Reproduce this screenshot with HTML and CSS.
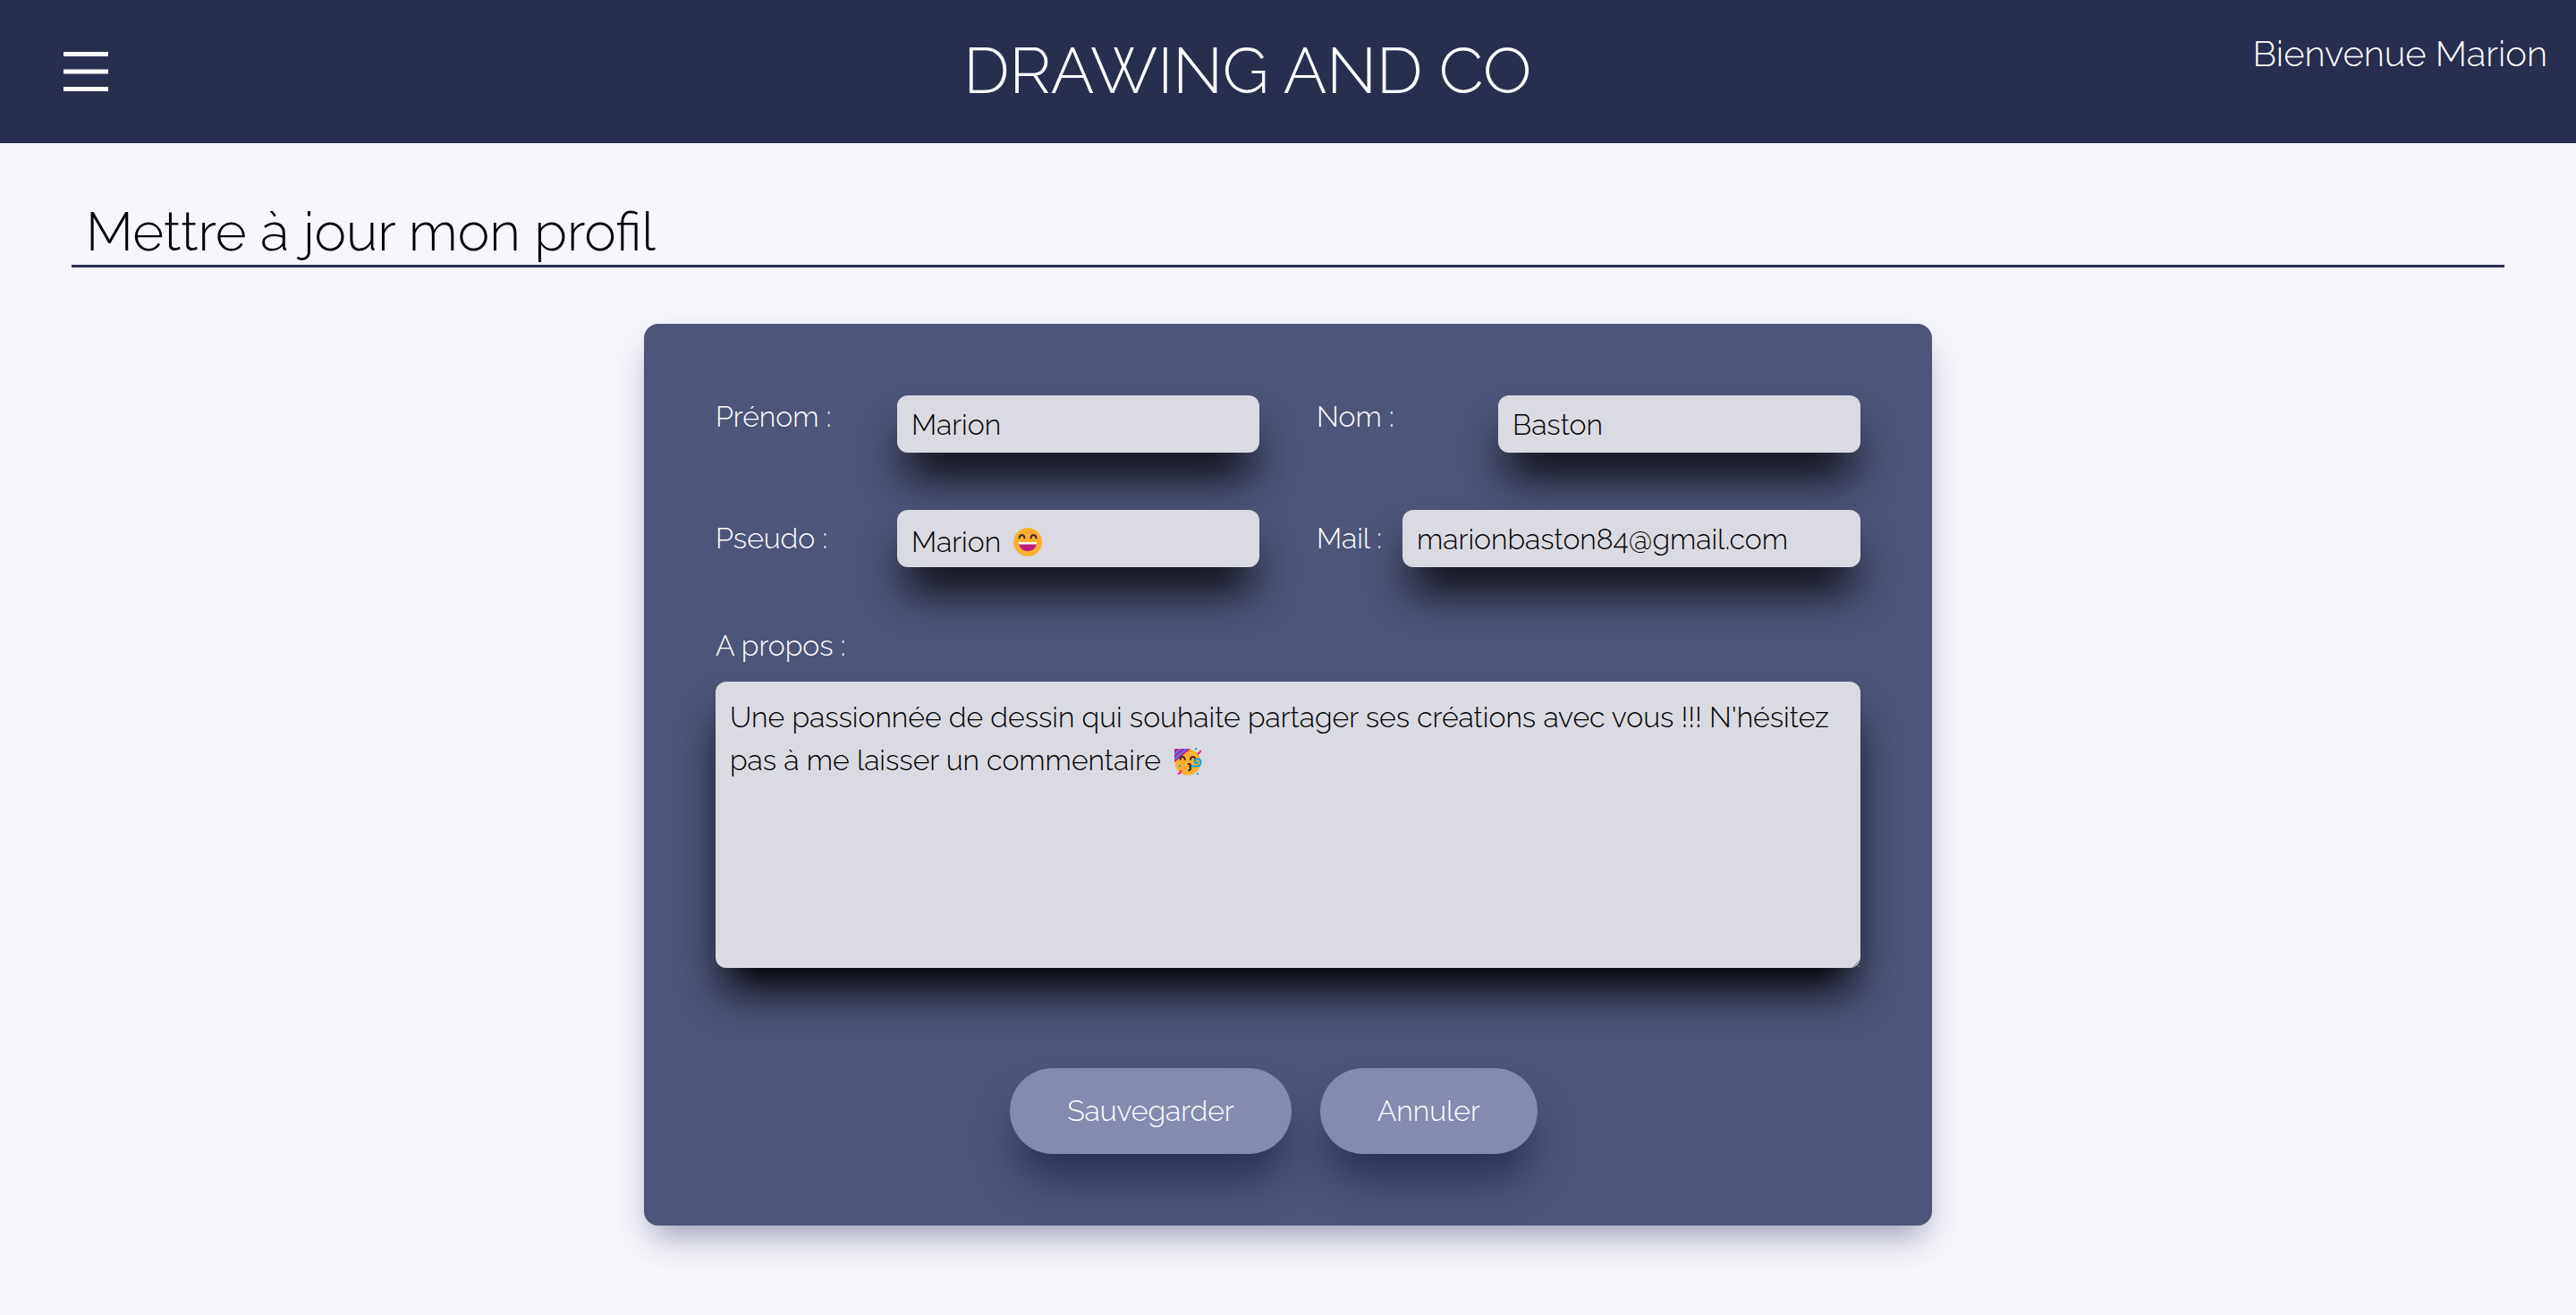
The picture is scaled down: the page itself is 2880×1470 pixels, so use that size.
FILE: index.html
```html
<!DOCTYPE html>
<html lang="fr">
<head>
  <meta charset="utf-8">
  <meta name="viewport" content="width=device-width, initial-scale=1">
  <title>Drawing and Co</title>
  <link rel="stylesheet" href="styles.css">
</head>
<body>
  <header class="header">
    <nav class="header-nav">
      <button class="burger" type="button" aria-label="Menu">
        <svg class="burger-icon" viewBox="0 0 50 44" aria-hidden="true">
          <path d="M0 0h50v5H0zM0 19.5h50v5H0zM0 39h50v5H0z" fill="currentColor"/>
        </svg>
      </button>
    </nav>
    <h1 class="brand">DRAWING AND CO</h1>
    <p class="welcome">Bienvenue Marion</p>
  </header>

  <main class="main">
    <h2 class="page-title">Mettre à jour mon profil</h2>

    <form class="card">
      <div class="fields">
        <div class="field field-top">
          <label for="firstname">Prénom :</label>
          <input class="input" id="firstname" type="text" value="Marion">
        </div>
        <div class="field field-top">
          <label for="lastname">Nom :</label>
          <input class="input" id="lastname" type="text" value="Baston">
        </div>
        <div class="field">
          <label for="pseudo">Pseudo :</label>
          <div class="emoji-field">
            <input class="input input-emoji" id="pseudo" type="text" value="Marion 😄">
            <svg class="emoji emoji-pseudo" viewBox="0 0 44 44" aria-hidden="true">
              <rect width="44" height="44" fill="#dadae2"/>
              <circle cx="22" cy="22" r="16" fill="#ffb02e"/>
              <path d="M12.5 17.5c.3-2.200 1.500-3.500 3-3.500s2.700 1.300 3 3.500M25.500 17.500c.3-2.200 1.500-3.500 3-3.500s2.700 1.300 3 3.500" fill="none" stroke="#402a32" stroke-width="2" stroke-linecap="round"/>
              <path d="M12 22h20c0 6-4 10-10 10s-10-4-10-10z" fill="#bb1d80"/>
              <path d="M12 22h20v1.500a1 1 0 0 1-1 1H13a1 1 0 0 1-1-1z" fill="#fff"/>
            </svg>
          </div>
        </div>
        <div class="field">
          <label for="mail">Mail :</label>
          <input class="input input-wide" id="mail" type="email" value="marionbaston84@gmail.com">
        </div>
      </div>
      <label class="about-label" for="about">A propos :</label>
      <div class="emoji-field">
        <textarea class="input about" id="about">Une passionnée de dessin qui souhaite partager ses créations avec vous !!! N'hésitez pas à me laisser un commentaire 🥳</textarea>
        <svg class="emoji emoji-about" viewBox="0 0 44 44" aria-hidden="true">
          <rect width="44" height="44" fill="#dadae2"/>
          <circle cx="22" cy="22" r="14.500" fill="#ffb02e"/>
          <path d="M7 7h18L7 22z" fill="#bb1d80"/>
          <path d="M12 7h3L7 15v-3zM19 7h3L7 20v-3z" fill="#5b7cf7"/>
          <path d="M13.500 19c.2-2 1.200-3 2.500-3s2.500 1 2.800 3M25 19c.2-2 1.200-3 2.500-3s2.300.8 2.800 2.500M22.500 24h1.500c1.500 0 1.500 3 0 3 1.800.2 1.800 4-1 4" fill="none" stroke="#402a32" stroke-width="2" stroke-linecap="round" stroke-linejoin="round"/>
          <path d="M26.500 26.500h5c3.500 0 5-2 5-4.500s-2-3.500-4-3.500-3 1.500-3 3 2.500 2.500 3.500.8" fill="none" stroke="#00a6ed" stroke-width="2" stroke-linecap="round"/>
          <path d="M36 9c.3 2-1 2.500-3 4M14 31c.3 2.500-1 4-3 4" fill="none" stroke="#f70a8d" stroke-width="2"/>
          <path d="M30 6h2v2h-2zM12 25h2v2h-2zM32 34h2v2h-2z" fill="#00a6ed"/>
        </svg>
      </div>
      <div class="actions">
        <button class="button" type="submit">Sauvegarder</button>
        <button class="button" type="button">Annuler</button>
      </div>
    </form>
  </main>
</body>
</html>
```
FILE: styles.css
```css
* {
  box-sizing: border-box;
}

body {
  margin: 0;
  background: #f6f6fc;
  color: #000;
  font-family: "Raleway", "Open Sans", "Noto Sans", sans-serif;
  font-size: 32px;
  font-weight: 300;
  line-height: 48px;
}

.header {
  display: flex;
  align-items: center;
  justify-content: space-between;
  min-height: 160px;
  padding: 0 32px 0 71px;
  background: #282e4e;
  color: #fff;
}

.header-nav {
  width: 200px;
}

.burger {
  display: block;
  padding: 0;
  border: 0;
  background: none;
  color: inherit;
}

.burger-icon {
  display: block;
  width: 50px;
  height: 44px;
}

.brand {
  margin: 0;
  padding-bottom: 2px;
  font-size: 72px;
  font-weight: 300;
  line-height: 96px;
}

.welcome {
  align-self: flex-start;
  margin: 32px 0 0;
  font-size: 40px;
  line-height: 56px;
}

.main {
  padding: 64px 80px 48px;
}

.page-title {
  margin: 0 0 63px;
  padding: 0 16px 2px;
  border-bottom: 3px solid #282e4e;
  font-size: 60px;
  font-weight: 300;
  line-height: 70px;
}

.card {
  width: 50vw;
  margin: 0 auto;
  padding: 80px;
  border-radius: 16px;
  background: #4d5578;
  box-shadow: 0 20px 36px -8px rgba(48, 56, 100, 0.45);
  color: #fff;
}

.fields {
  display: grid;
  grid-template-columns: 1fr 1fr;
  gap: 64px;
}

.field {
  display: flex;
  align-items: center;
  justify-content: space-between;
}

.field-top {
  align-items: flex-start;
}

.input {
  display: block;
  width: 405px;
  height: 64px;
  padding: 0 16px;
  border: 0;
  border-radius: 12px;
  background: #dadae2;
  box-shadow: 0 34px 48px -10px #000;
  color: #000;
  font: inherit;
}

.input-wide {
  width: 512px;
}

.input-emoji {
  padding-top: 8px;
}

/* Emoji artwork laid over the glyph of the text field */
.emoji-field {
  position: relative;
}

.emoji {
  position: absolute;
  width: 44px;
  height: 44px;
  pointer-events: none;
}

.emoji-pseudo {
  top: 14px;
  left: 124px;
}

.emoji-about {
  top: 68px;
  left: 506px;
}

.about-label {
  display: block;
  margin: 64px 0 16px;
}

.about {
  width: 100%;
  height: 320px;
  padding: 16px;
}

.actions {
  display: flex;
  justify-content: center;
  margin-top: 112px;
}

.button {
  margin-right: 32px;
  padding: 24px 64px;
  border: 0;
  border-radius: 48px;
  background: #848baf;
  box-shadow: 0 34px 48px -10px #282e4e;
  color: #fff;
  font: inherit;
}
```
